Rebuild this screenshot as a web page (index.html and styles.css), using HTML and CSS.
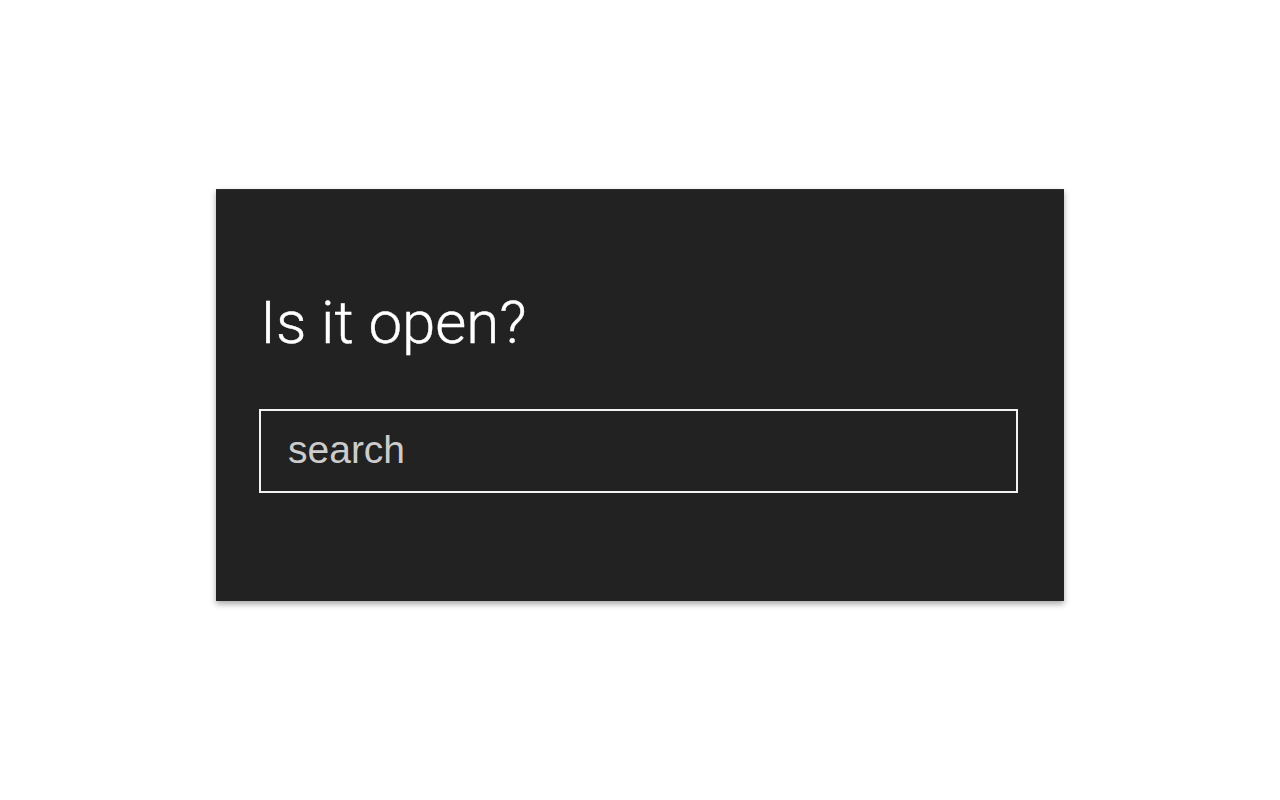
FILE: index.html
```html
<!DOCTYPE html>
<html>
<head>
<meta charset="utf-8">
<link rel="stylesheet" href="styles.css">
</head>
<body>
<main class="stage">
  <section class="card">
    <h1 class="title">Is it open?</h1>
    <div class="search-box">
      <span class="placeholder">search</span>
    </div>
  </section>
</main>
</body>
</html>
```
FILE: styles.css
```css
html, body {
  margin: 0;
  padding: 0;
  background: #ffffff;
}
.stage {
  width: 1280px;
  height: 800px;
  padding-top: 189px;
  padding-left: 216px;
  box-sizing: border-box;
}
.card {
  width: 848px;
  height: 412px;
  background: #222222;
  box-shadow: 0 3px 6px rgba(0,0,0,0.35);
  box-sizing: border-box;
  padding: 98px 46px 0 43px;
  border-top: 1px solid #2e2e30;
}
.title {
  margin: 0 0 0 1px;
  font-family: Roboto, "Liberation Sans", sans-serif;
  font-weight: 300;
  font-size: 60px;
  line-height: 70px;
  color: #ffffff;
  letter-spacing: 0;
  -webkit-text-stroke: 0.4px #ffffff;
}
.search-box {
  margin-top: 51px;
  height: 84px;
  border: 2px solid #f2f2f2;
  box-sizing: border-box;
  display: flex;
  align-items: center;
  padding-left: 27px;
}
.placeholder {
  font-family: "Liberation Sans", Arial, sans-serif;
  font-size: 39px;
  color: #cccccc;
  position: relative;
  top: -1px;
}
```
